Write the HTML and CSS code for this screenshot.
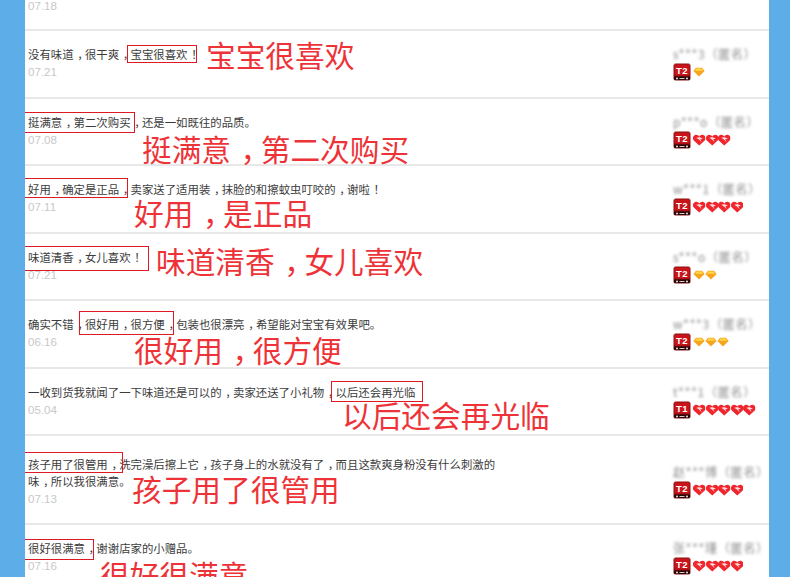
FILE: index.html
```html
<!DOCTYPE html>
<html lang="zh-CN">
<head>
  <meta charset="UTF-8">
  <title>评价</title>
  <link rel="stylesheet" href="styles.css">
</head>
<body>

  <svg class="defs" width="0" height="0">
    <symbol id="badge" viewBox="0 0 18 18">
      <rect x="0.5" y="0.5" width="17" height="17" rx="2.5" fill="#8e1013" stroke="#c98a8a" stroke-width="0.6"/>
      <rect x="1.5" y="1.5" width="15" height="11" rx="1.5" fill="#c8141a"/>
      <rect x="1" y="13.5" width="16" height="3.6" rx="1" fill="#2a0707"/>
      <circle cx="4" cy="15.4" r="1" fill="#f0e4e4"/>
      <circle cx="14" cy="15.4" r="1" fill="#f0e4e4"/>
      <rect x="6.5" y="15" width="5" height="1" fill="#d8c8c8"/>
    </symbol>
    <symbol id="heart" viewBox="0 0 13 12">
      <path d="M6.5 11.8.8 6.4C-.6 4.8-.2 2 1.7 1 3.6 0 5.5.8 6.5 2.4 7.5.8 9.4 0 11.3 1 13.2 2 13.6 4.8 12.2 6.4Z" fill="#f0262e"/>
      <path d="M3.4 4C5 2.8 8.4 3 10.2 5 9 4.7 7.9 5 7.3 5.6 8.2 6.2 8.6 7 8.6 8 7 6.2 5.2 4.6 3.4 4Z" fill="#ffdcdc"/>
    </symbol>
    <symbol id="diamond" viewBox="0 0 12 10">
      <path d="M3 .8h6L11.6 4 6 9.6.4 4Z" fill="#f7a51c"/>
      <path d="M3.4 1.6h5.2L10 3.8H2Z" fill="#ffd94a"/>
    </symbol>
  </svg>

  <div class="panel">

    <div class="row row-cut">
      <div class="review">
        <div class="date">07.18</div>
      </div>
    </div>

    <div class="row">
      <div class="review">
        <p class="text">没有味道<span class="p">，</span>很干爽<span class="p">，</span>宝宝很喜欢<span class="p">！</span></p>
        <div class="date">07.21</div>
      </div>
      <div class="buyer">
        <div class="name">s***3（匿名）</div>
        <div class="level">
          <svg class="badge"><use href="#badge"/></svg><span class="grade">T2</span>
          <svg class="diamond"><use href="#diamond"/></svg>
        </div>
      </div>
      <span class="box box-2"></span>
      <span class="note note-2">宝宝很喜欢</span>
    </div>

    <div class="row row-short">
      <div class="review">
        <p class="text">挺满意<span class="p">，</span>第二次购买<span class="p">，</span>还是一如既往的品质。</p>
        <div class="date">07.08</div>
      </div>
      <div class="buyer">
        <div class="name">p***o（匿名）</div>
        <div class="level">
          <svg class="badge"><use href="#badge"/></svg><span class="grade">T2</span>
          <svg class="heart"><use href="#heart"/></svg>
          <svg class="heart"><use href="#heart"/></svg>
          <svg class="heart"><use href="#heart"/></svg>
        </div>
      </div>
      <span class="box box-3"></span>
      <span class="note note-3">挺满意<span class="p">，</span>第二次购买</span>
    </div>

    <div class="row">
      <div class="review">
        <p class="text">好用<span class="p">，</span>确定是正品<span class="p">，</span>卖家送了适用装<span class="p">，</span>抹脸的和擦蚊虫叮咬的<span class="p">，</span>谢啦<span class="p">！</span></p>
        <div class="date">07.11</div>
      </div>
      <div class="buyer">
        <div class="name">w***1（匿名）</div>
        <div class="level">
          <svg class="badge"><use href="#badge"/></svg><span class="grade">T2</span>
          <svg class="heart"><use href="#heart"/></svg>
          <svg class="heart"><use href="#heart"/></svg>
          <svg class="heart"><use href="#heart"/></svg>
          <svg class="heart"><use href="#heart"/></svg>
        </div>
      </div>
      <span class="box box-4"></span>
      <span class="note note-4">好用<span class="p">，</span>是正品</span>
    </div>

    <div class="row row-short">
      <div class="review">
        <p class="text">味道清香<span class="p">，</span>女儿喜欢<span class="p">！</span></p>
        <div class="date">07.21</div>
      </div>
      <div class="buyer">
        <div class="name">s***o（匿名）</div>
        <div class="level">
          <svg class="badge"><use href="#badge"/></svg><span class="grade">T2</span>
          <svg class="diamond"><use href="#diamond"/></svg>
          <svg class="diamond"><use href="#diamond"/></svg>
        </div>
      </div>
      <span class="box box-5"></span>
      <span class="note note-5">味道清香<span class="p">，</span>女儿喜欢</span>
    </div>

    <div class="row">
      <div class="review">
        <p class="text">确实不错<span class="p">，</span>很好用<span class="p">，</span>很方便<span class="p">，</span>包装也很漂亮<span class="p">，</span>希望能对宝宝有效果吧。</p>
        <div class="date">06.16</div>
      </div>
      <div class="buyer">
        <div class="name">w***3（匿名）</div>
        <div class="level">
          <svg class="badge"><use href="#badge"/></svg><span class="grade">T2</span>
          <svg class="diamond"><use href="#diamond"/></svg>
          <svg class="diamond"><use href="#diamond"/></svg>
          <svg class="diamond"><use href="#diamond"/></svg>
        </div>
      </div>
      <span class="box box-6"></span>
      <span class="note note-6">很好用<span class="p">，</span>很方便</span>
    </div>

    <div class="row row-short">
      <div class="review">
        <p class="text">一收到货我就闻了一下味道还是可以的<span class="p">，</span>卖家还送了小礼物<span class="p">，</span>以后还会再光临</p>
        <div class="date">05.04</div>
      </div>
      <div class="buyer">
        <div class="name">t***1（匿名）</div>
        <div class="level">
          <svg class="badge"><use href="#badge"/></svg><span class="grade">T1</span>
          <svg class="heart"><use href="#heart"/></svg>
          <svg class="heart"><use href="#heart"/></svg>
          <svg class="heart"><use href="#heart"/></svg>
          <svg class="heart"><use href="#heart"/></svg>
          <svg class="heart"><use href="#heart"/></svg>
        </div>
      </div>
      <span class="box box-7"></span>
      <span class="note note-7">以后还会再光临</span>
    </div>

    <div class="row row-tall">
      <div class="review">
        <p class="text">孩子用了很管用<span class="p">，</span>洗完澡后擦上它<span class="p">，</span>孩子身上的水就没有了<span class="p">，</span>而且这款爽身粉没有什么刺激的味<span class="p">，</span>所以我很满意。</p>
        <div class="date">07.13</div>
      </div>
      <div class="buyer">
        <div class="name">赵***博（匿名）</div>
        <div class="level">
          <svg class="badge"><use href="#badge"/></svg><span class="grade">T2</span>
          <svg class="heart"><use href="#heart"/></svg>
          <svg class="heart"><use href="#heart"/></svg>
          <svg class="heart"><use href="#heart"/></svg>
          <svg class="heart"><use href="#heart"/></svg>
        </div>
      </div>
      <span class="box box-8"></span>
      <span class="note note-8">孩子用了很管用</span>
    </div>

    <div class="row row-last">
      <div class="review">
        <p class="text">很好很满意<span class="p">，</span>谢谢店家的小赠品。</p>
        <div class="date">07.16</div>
      </div>
      <div class="buyer">
        <div class="name">张***瑾（匿名）</div>
        <div class="level">
          <svg class="badge"><use href="#badge"/></svg><span class="grade">T2</span>
          <svg class="heart"><use href="#heart"/></svg>
          <svg class="heart"><use href="#heart"/></svg>
          <svg class="heart"><use href="#heart"/></svg>
          <svg class="heart"><use href="#heart"/></svg>
        </div>
      </div>
      <span class="box box-9"></span>
      <span class="note note-9">很好很满意</span>
    </div>

  </div>

</body>
</html>
```

FILE: styles.css
```css
* {
  margin: 0;
  padding: 0;
  box-sizing: border-box;
}
html, body {
  height: 577px;
  overflow: hidden;
}
body {
  background: #5daee8;
  font-family: "Noto Sans CJK SC", sans-serif;
}
.defs {
  display: block;
  height: 0;
}
.panel {
  margin: 0 21px 0 25px;
  height: 577px;
  background: #fff;
  overflow: hidden;
}

/* review rows */
.row {
  position: relative;
  display: flex;
  height: 68px;
  border-bottom: 2px solid #e8e8e8;
}
.row-short {
  height: 67px;
}
.row-cut {
  height: 31px;
}
.row-tall {
  height: 89px;
}
.row-last {
  height: 60px;
  border-bottom: none;
}
.review {
  flex: 1;
  padding: 14px 0 0 3px;
}
.row-cut .review {
  padding-top: 0;
}
.row-cut .date {
  line-height: 11px;
}
.row-tall .review {
  padding-top: 19px;
}
.text {
  width: 472px;
  padding-top: 1px;
  font-size: 11.4px;
  line-height: 17px;
  color: #3c3c3c;
}
.date {
  font-family: "Liberation Sans", sans-serif;
  font-size: 11.6px;
  line-height: 18px;
  color: #c8c8c8;
}
/* full-width punctuation sits in the middle of its cell here */
.p {
  padding-left: 0.32em;
  letter-spacing: -0.32em;
}

/* buyer column */
.buyer {
  width: 96px;
  padding-top: 14px;
}
.row-tall .buyer {
  padding-top: 27px;
}
.name {
  font-size: 12px;
  letter-spacing: 0.8px;
  line-height: 18px;
  color: #8c8c8c;
  white-space: nowrap;
  filter: blur(1.4px);
}
.level {
  position: relative;
  display: flex;
  align-items: center;
  height: 18px;
}
.badge {
  width: 18px;
  height: 18px;
  margin-right: 2px;
  filter: blur(0.3px);
}
.grade {
  position: absolute;
  left: 0;
  top: 2px;
  width: 18px;
  font-family: "Liberation Sans", sans-serif;
  font-size: 9.5px;
  font-weight: bold;
  letter-spacing: 0.5px;
  line-height: 11px;
  text-align: center;
  color: #fff;
}
.heart {
  width: 12.5px;
  height: 12px;
  filter: blur(0.35px);
}
.diamond {
  width: 12px;
  height: 10px;
}

/* red annotations laid over the reviews */
.box {
  position: absolute;
  border: 1px solid #dd1a24;
}
.box-2 { left: 102px; top: 14px; width: 70px; height: 18px; }
.box-3 { left: -1px; top: 13px; width: 111px; height: 21px; }
.box-4 { left: -1px; top: 12px; width: 104px; height: 20px; }
.box-5 { left: -1px; top: 12px; width: 125px; height: 25px; }
.box-6 { left: 54px; top: 10px; width: 95px; height: 24px; }
.box-7 { left: 306px; top: 12px; width: 92px; height: 21px; }
.box-8 { left: -1px; top: 16px; width: 99px; height: 21px; }
.box-9 { left: -1px; top: 14px; width: 70px; height: 21px; }

.note {
  position: absolute;
  font-size: 29.7px;
  line-height: 30px;
  color: #ee3338;
  white-space: nowrap;
}
.note-2 { left: 181px; top: 9px; }
.note-3 { left: 117px; top: 35px; }
.note-4 { left: 109px; top: 32px; }
.note-5 { left: 131px; top: 12px; }
.note-6 { left: 109px; top: 34px; }
.note-7 { left: 317px; top: 31px; }
.note-8 { left: 107px; top: 38px; }
.note-9 { left: 75px; top: 35px; }
```
